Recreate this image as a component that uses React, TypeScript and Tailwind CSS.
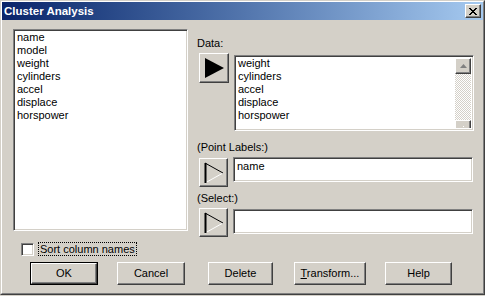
import React from 'react';

const raised =
  'border border-t-white border-l-white border-r-[#404040] border-b-[#404040] shadow-[inset_-1px_-1px_0_#808080]';
const sunken =
  'border border-t-[#808080] border-l-[#808080] border-r-white border-b-white shadow-[inset_1px_1px_0_#404040,inset_-1px_-1px_0_#d4d0c8]';

const columns = ['name', 'model', 'weight', 'cylinders', 'accel', 'displace', 'horspower'];
const dataCols = ['weight', 'cylinders', 'accel', 'displace', 'horspower'];

function ArrowButton({ filled, size }: { filled?: boolean; size: number }) {
  return (
    <div
      className={`${raised} bg-[#d4d0c8] flex items-center justify-center shrink-0`}
      style={{ width: size, height: size }}
    >
      <svg width="22" height="22" viewBox="0 0 22 22">
        {filled ? (
          <polygon points="2,1 21,11 2,21" fill="#000" />
        ) : (
          <>
            <line x1="2" y1="21" x2="20" y2="11" stroke="#fff" strokeWidth="1" />
            <line x1="2.5" y1="1" x2="2.5" y2="21" stroke="#000" strokeWidth="2" />
            <line x1="2" y1="1" x2="20" y2="11" stroke="#000" strokeWidth="1" />
          </>
        )}
      </svg>
    </div>
  );
}

function DlgButton({ label, width, ml, def }: { label: React.ReactNode; width: number; ml: number; def?: boolean }) {
  const inner = (
    <div className={`${raised} bg-[#d4d0c8] h-full flex items-center justify-center`}>{label}</div>
  );
  return (
    <div className="h-[23px] shrink-0" style={{ width, marginLeft: ml }}>
      {def ? <div className="h-full border border-black">{inner}</div> : inner}
    </div>
  );
}

export default function App() {
  return (
    <div
      className="w-[485px] h-[296px] bg-[#d4d0c8] text-black text-[11px] leading-[13px]"
      style={{ fontFamily: '"Liberation Sans", Arial, sans-serif' }}
    >
      <div className="w-[485px] h-[295px] border border-t-[#d4d0c8] border-l-[#d4d0c8] border-r-[#404040] border-b-[#404040]">
        <div className="h-full border border-t-white border-l-white border-r-[#808080] border-b-[#808080] flex flex-col">
          {/* title bar */}
          <div className="h-[18px] bg-gradient-to-r from-[#0a246a] to-[#a6caf0] flex items-center pl-[2px] pr-[2px]">
            <span className="text-white font-bold text-[11.5px] flex-1">Cluster Analysis</span>
            <div className={`${raised} bg-[#d4d0c8] w-[16px] h-[14px] flex items-center justify-center`}>
              <svg width="8" height="7" viewBox="0 0 8 7">
                <path d="M0 0L7 7M1 0L8 7M7 0L0 7M8 0L1 7" stroke="#000" strokeWidth="1" />
              </svg>
            </div>
          </div>

          <div className="flex pl-[11px] mt-[9px] h-[202px]">
            {/* left list */}
            <div className={`${sunken} bg-white w-[175px] h-[202px] pl-[3px] pt-[1px] shrink-0`}>
              {columns.map((c) => (
                <div key={c}>{c}</div>
              ))}
            </div>

            {/* right column */}
            <div className="ml-[9px] pt-[8px] flex flex-col">
              <div>Data:</div>
              <div className="flex mt-[3px] ml-[2px]">
                <ArrowButton filled size={30} />
                <div className={`${sunken} bg-white w-[240px] h-[76px] ml-[5px] mt-[2px] flex`}>
                  <div className="flex-1 pl-[3px] pt-[1px]">
                    {dataCols.map((c) => (
                      <div key={c}>{c}</div>
                    ))}
                  </div>
                  <div className="w-[16px] my-[2px] mr-[2px] flex flex-col">
                    <div className={`${raised} bg-[#d4d0c8] h-[16px] flex items-center justify-center`}>
                      <svg width="7" height="4" viewBox="0 0 7 4">
                        <polygon points="3.5,0 7,4 0,4" fill="#808080" />
                      </svg>
                    </div>
                    <div className="flex-1 bg-[repeating-conic-gradient(#d4d0c8_0_25%,#ffffff_0_50%)] bg-[length:2px_2px]" />
                    <div className="h-[8px] bg-[#d4d0c8] border-t border-l border-t-white border-l-white border-r border-r-[#404040] shadow-[inset_-1px_0_0_#808080] flex justify-center items-end">
                      <div className="w-[1px] h-[1px] bg-white mb-[1px]" />
                    </div>
                  </div>
                </div>
              </div>

              <div className="mt-[10px]">(Point Labels:)</div>
              <div className="flex mt-[4px] ml-[2px]">
                <ArrowButton size={29} />
                <div className={`${sunken} bg-white w-[240px] h-[25px] ml-[5px] -mt-[1px] pl-[3px] pt-[2px]`}>name</div>
              </div>

              <div className="mt-[5px]">(Select:)</div>
              <div className="flex mt-[3px] ml-[2px]">
                <ArrowButton size={29} />
                <div className={`${sunken} bg-white w-[240px] h-[25px] ml-[5px] mt-[1px]`} />
              </div>
            </div>
          </div>

          {/* checkbox */}
          <div className="flex items-center pl-[19px] mt-[11px] h-[14px]">
            <div className={`${sunken} bg-white w-[13px] h-[13px]`} />
            <div className="ml-[4px] border border-dotted border-black px-[1px] h-[14px] leading-[12px]">
              Sort column names
            </div>
          </div>

          {/* buttons */}
          <div className="flex mt-[6px] pl-[28px]">
            <DlgButton label="OK" width={68} ml={0} def />
            <DlgButton label="Cancel" width={68} ml={19} />
            <DlgButton label="Delete" width={65} ml={23} />
            <DlgButton
              label={
                <span>
                  <span className="underline">T</span>ransform...
                </span>
              }
              width={72}
              ml={21}
            />
            <DlgButton label="Help" width={67} ml={19} />
          </div>
        </div>
      </div>
    </div>
  );
}
